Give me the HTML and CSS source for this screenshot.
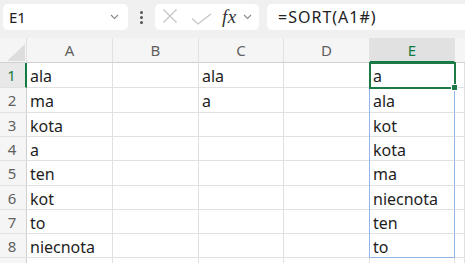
FILE: index.html
```html
<!DOCTYPE html>
<html lang="pl">
<head>
  <meta charset="utf-8">
  <title>Arkusz</title>
  <link rel="stylesheet" href="styles.css">
</head>
<body>
  <div class="app">
    <div class="toolbar">
      <div class="namebox">
        <span class="name">E1</span>
        <svg class="chev" width="9" height="6" viewBox="0 0 9 6"><path d="M1 1 L4.5 4.5 L8 1"/></svg>
      </div>
      <div class="grip"><i></i><i></i><i></i></div>
      <div class="fxbox">
        <svg class="ico-x" width="16" height="16" viewBox="0 0 16 16"><path d="M1.5 1.5 L14.5 14.5 M14.5 1.5 L1.5 14.5"/></svg>
        <svg class="ico-ok" width="21" height="12" viewBox="0 0 21 12"><path d="M1 5.5 L7 11 L20 1"/></svg>
        <span class="fx">fx</span>
        <svg class="chev" width="9" height="6" viewBox="0 0 9 6"><path d="M1 1 L4.5 4.5 L8 1"/></svg>
      </div>
      <div class="formula">=SORT(A1#)</div>
    </div>

    <div class="sheet">
      <div class="corner"><span class="tri"></span></div>
      <div class="colhead">A</div>
      <div class="colhead">B</div>
      <div class="colhead">C</div>
      <div class="colhead">D</div>
      <div class="colhead sel">E</div>
      <div class="colhead last"></div>

      <div class="rowhead sel">1</div>
      <div class="cell">ala</div><div class="cell"></div><div class="cell">ala</div><div class="cell"></div><div class="cell sp active">a</div><div class="cell"></div>

      <div class="rowhead">2</div>
      <div class="cell">ma</div><div class="cell"></div><div class="cell">a</div><div class="cell"></div><div class="cell sp">ala</div><div class="cell"></div>

      <div class="rowhead">3</div>
      <div class="cell">kota</div><div class="cell"></div><div class="cell"></div><div class="cell"></div><div class="cell sp">kot</div><div class="cell"></div>

      <div class="rowhead">4</div>
      <div class="cell">a</div><div class="cell"></div><div class="cell"></div><div class="cell"></div><div class="cell sp">kota</div><div class="cell"></div>

      <div class="rowhead">5</div>
      <div class="cell">ten</div><div class="cell"></div><div class="cell"></div><div class="cell"></div><div class="cell sp">ma</div><div class="cell"></div>

      <div class="rowhead">6</div>
      <div class="cell">kot</div><div class="cell"></div><div class="cell"></div><div class="cell"></div><div class="cell sp">niecnota</div><div class="cell"></div>

      <div class="rowhead">7</div>
      <div class="cell">to</div><div class="cell"></div><div class="cell"></div><div class="cell"></div><div class="cell sp">ten</div><div class="cell"></div>

      <div class="rowhead">8</div>
      <div class="cell">niecnota</div><div class="cell"></div><div class="cell"></div><div class="cell"></div><div class="cell sp end">to</div><div class="cell"></div>

      <div class="rowhead"></div>
      <div class="cell"></div><div class="cell"></div><div class="cell"></div><div class="cell"></div><div class="cell"></div><div class="cell"></div>
    </div>
  </div>
</body>
</html>
```

FILE: styles.css
```css
html, body {
  margin: 0;
  padding: 0;
}
body {
  font-family: "Noto Sans", "Open Sans", sans-serif;
  color: #1e1e1e;
  background: #ffffff;
  overflow: hidden;
}
.app {
  width: 465px;
  height: 263px;
  overflow: hidden;
}

/* formula bar */
.toolbar {
  height: 38px;
  background: #f0f0f0;
  display: flex;
  align-items: flex-start;
  padding: 4px 0 0 3px;
  box-sizing: border-box;
}
.namebox {
  width: 125px;
  height: 26px;
  background: #fff;
  border-radius: 5px;
  display: flex;
  align-items: center;
  justify-content: space-between;
  padding: 0 9px 0 6px;
  box-sizing: border-box;
}
.name {
  font-size: 15px;
  color: #222;
  line-height: 26px;
}
.chev path {
  fill: none;
  stroke: #8a8a8a;
  stroke-width: 1.1;
}
.grip {
  width: 27px;
  height: 26px;
  display: flex;
  flex-direction: column;
  align-items: center;
  justify-content: center;
  gap: 2px;
}
.grip i {
  display: block;
  width: 3px;
  height: 3px;
  border-radius: 50%;
  background: #555;
}
.fxbox {
  width: 104px;
  height: 26px;
  background: #fff;
  border-radius: 5px;
  display: flex;
  align-items: center;
  padding: 0 0 0 7px;
  box-sizing: border-box;
}
.ico-x path, .ico-ok path {
  fill: none;
  stroke: #c4c4c4;
  stroke-width: 1.2;
}
.ico-x {
  margin-top: -2px;
}
.ico-ok {
  margin-left: 13px;
  margin-top: 3px;
}
.fx {
  font-family: "Liberation Serif", "DejaVu Serif", serif;
  font-style: italic;
  font-size: 19px;
  color: #333;
  margin-left: 10px;
  line-height: 26px;
  letter-spacing: 0.5px;
}
.fxbox .chev {
  margin-left: 6px;
}
.formula {
  flex: 1;
  margin-left: 8px;
  height: 26px;
  background: #fff;
  border-radius: 5px 0 0 5px;
  font-size: 16px;
  letter-spacing: 1px;
  line-height: 26px;
  padding-left: 11px;
  color: #222;
}

/* sheet grid */
.sheet {
  display: grid;
  grid-template-columns: 27px 86px 86px 85px 86px 85px 1fr;
  grid-template-rows: 25px 25px 25px 24px 24px 25px 24px 24px 24px 24px;
}
.corner, .colhead, .rowhead, .cell {
  box-sizing: border-box;
  border-right: 1px solid #e1e1e1;
  border-bottom: 1px solid #e1e1e1;
}
.corner, .colhead, .rowhead {
  background: #f5f5f5;
  color: #616161;
  font-size: 15px;
}
.corner {
  display: flex;
  align-items: flex-end;
  justify-content: flex-end;
  padding: 0 1px 1px 0;
  border-bottom-color: #d0d0d0;
}
.tri {
  width: 0;
  height: 0;
  border-left: 18px solid transparent;
  border-bottom: 17px solid #dddddd;
}
.colhead {
  display: flex;
  align-items: center;
  justify-content: center;
  border-bottom-color: #d0d0d0;
  line-height: 22px;
}
.colhead.sel {
  background: #e1e1e1;
  color: #107c41;
  border-bottom: 2px solid #107c41;
}
.colhead.last {
  border-right: none;
}
.rowhead {
  display: flex;
  align-items: center;
  justify-content: center;
  padding-right: 2px;
  line-height: 22px;
  border-right-color: #d0d0d0;
}
.rowhead.sel {
  background: #e8e8e8;
  color: #107c41;
  border-right: 2px solid #107c41;
}
.cell {
  font-size: 16px;
  line-height: 22px;
  padding: 2px 0 0 3px;
  white-space: nowrap;
  background: #fff;
}

/* spill range E1:E8 */
.cell.sp {
  border-right-color: #94b3e6;
  box-shadow: -1px 0 0 #94b3e6;
}
.cell.sp.end {
  border-bottom-color: #94b3e6;
}

/* active cell E1 */
.cell.active {
  position: relative;
  z-index: 1;
  outline: 2px solid #1d7a46;
  outline-offset: -1px;
}
.cell.active::after {
  content: "";
  position: absolute;
  right: -4px;
  bottom: -4px;
  width: 5px;
  height: 5px;
  background: #1d7a46;
  border: 1px solid #fff;
}
```
